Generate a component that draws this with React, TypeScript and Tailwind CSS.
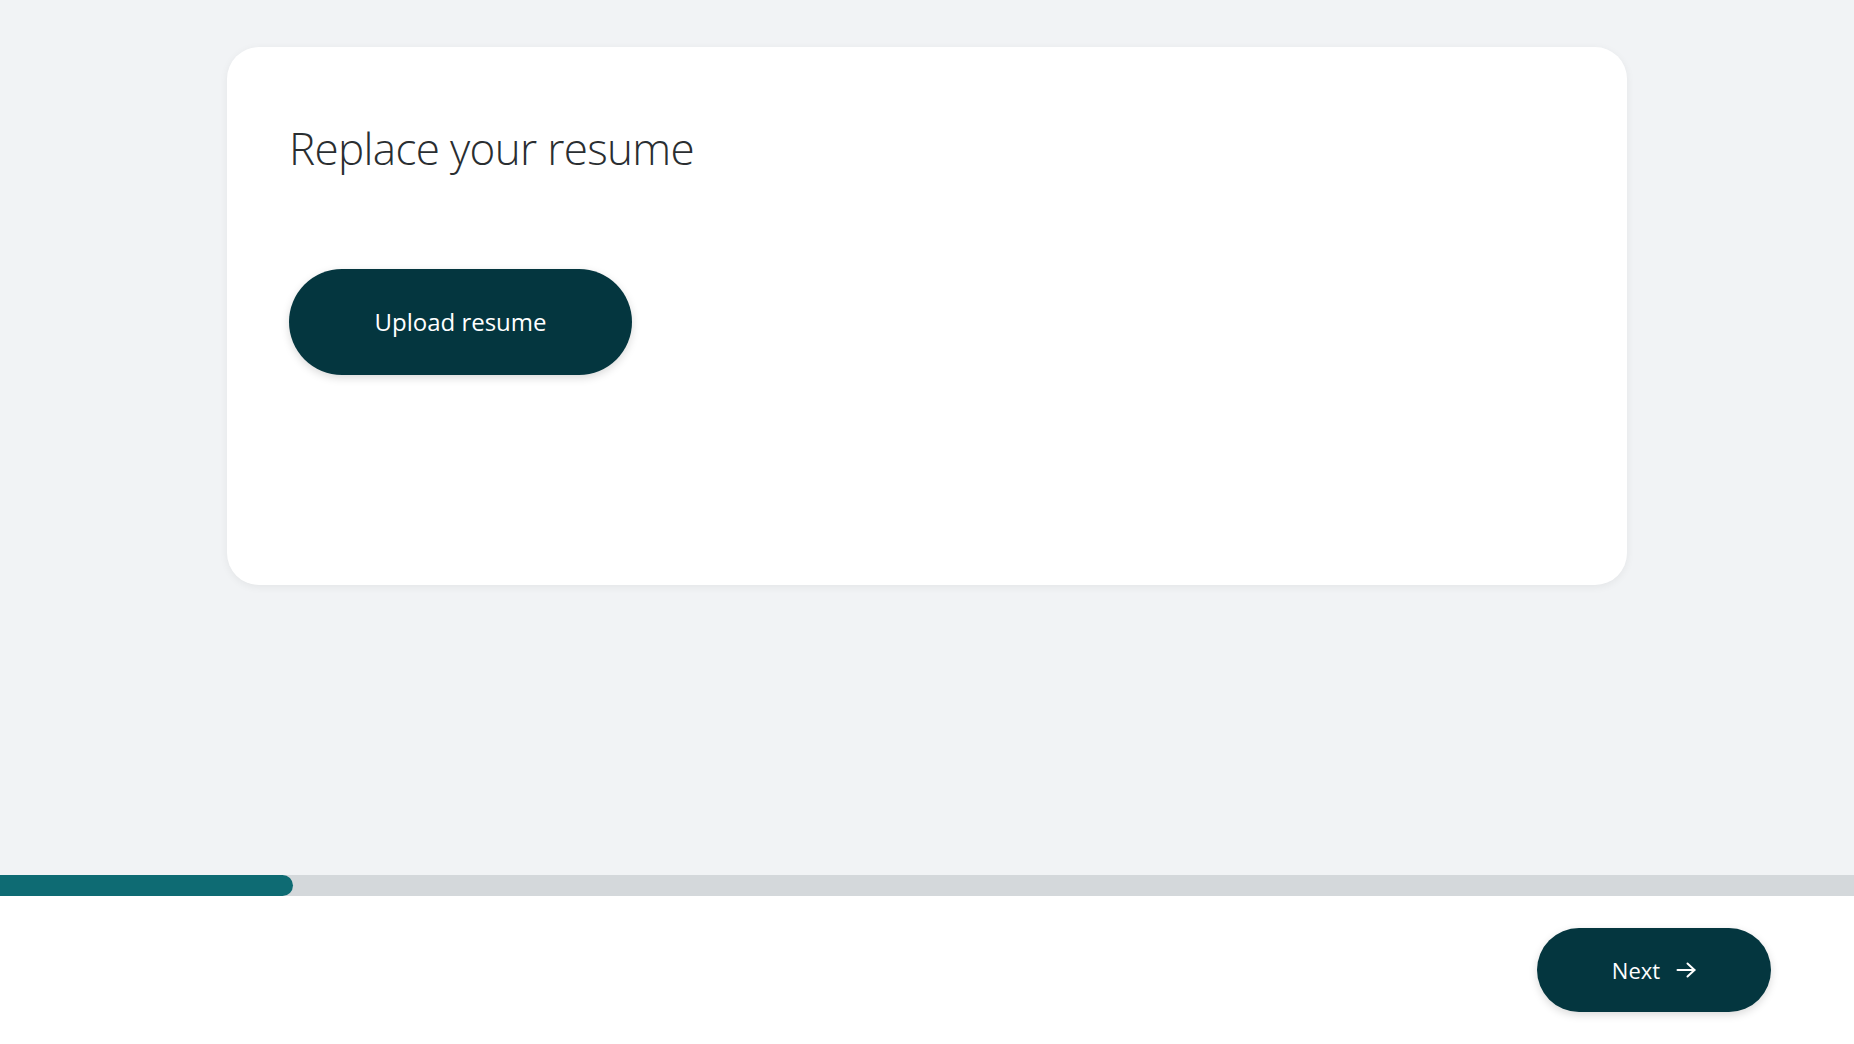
export default function App() {
    const progress = 293
    return (
        <div className="flex flex-col h-[1044px] w-full bg-white font-['Open_Sans',sans-serif]">
            <main className="flex-1 bg-[#f1f3f5] flex justify-center pt-[47px]">
                <div className="w-[1400px] h-[538px] bg-white rounded-[32px] shadow-[0_2px_8px_rgba(0,0,0,0.06)] px-[62px] pt-[75px]">
                    <h1 className="text-[44px] leading-[1.2] font-light tracking-[-0.015em] text-[#2a2e31]">Replace your resume</h1>
                    <button className="mt-[94px] w-[343px] h-[106px] rounded-full bg-[#04363f] text-white text-[24px] font-medium shadow-[0_3px_8px_rgba(0,0,0,0.15)]">
                        Upload resume
                    </button>
                </div>
            </main>
            <div className="h-[21px] bg-[#d4d8db]">
                <div className="h-full rounded-r-full bg-[#0e6b73]" style={{ width: progress }} />
            </div>
            <footer className="h-[148px] flex items-center justify-end pr-[83px]">
                <button className="w-[234px] h-[84px] rounded-full bg-[#04363f] text-white text-[22px] font-medium flex items-center justify-center gap-[16px] shadow-[0_3px_8px_rgba(0,0,0,0.15)]">
                    Next
                    <svg width="20" height="16" viewBox="0 0 20 16" fill="none" stroke="currentColor" strokeWidth="2" strokeLinecap="round" strokeLinejoin="round">
                        <path d="M1.5 8h17" />
                        <path d="M11.5 1.5L18.5 8l-7 6.5" />
                    </svg>
                </button>
            </footer>
        </div>
    )
}
